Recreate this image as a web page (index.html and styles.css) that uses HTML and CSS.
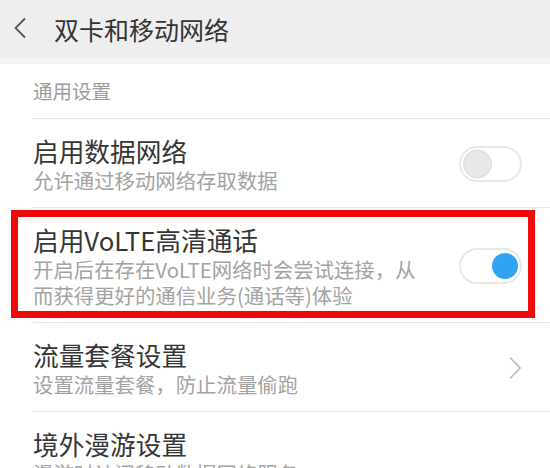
FILE: index.html
```html
<!DOCTYPE html>
<html lang="zh-CN">
<head>
<meta charset="utf-8">
<title>双卡和移动网络</title>
<link rel="stylesheet" href="styles.css">
</head>
<body>
<div class="page">
  <header class="topbar">
    <svg class="back" width="14" height="22" viewBox="0 0 14 22"><path d="M12 1.5 L2.5 11 L12 20.5" fill="none" stroke="#555" stroke-width="1.8"/></svg>
    <span class="title">双卡和移动网络</span>
  </header>
  <div class="strip"></div>
  <div class="section">通用设置</div>
  <div class="list">
    <div class="item">
      <div class="text">
        <div class="name">启用数据网络</div>
        <div class="desc">允许通过移动网络存取数据</div>
      </div>
      <div class="toggle"><span class="knob off"></span></div>
    </div>
    <div class="item">
      <div class="text">
        <div class="name">启用VoLTE高清通话</div>
        <div class="desc">开启后在存在VoLTE网络时会尝试连接，从<br>而获得更好的通信业务(通话等)体验</div>
      </div>
      <div class="toggle"><span class="knob blue"></span></div>
      <div class="redbox"></div>
    </div>
    <div class="item">
      <div class="text">
        <div class="name">流量套餐设置</div>
        <div class="desc">设置流量套餐，防止流量偷跑</div>
      </div>
      <svg class="chev" width="14" height="24" viewBox="0 0 14 24"><path d="M2 1.5 L12 12 L2 22.5" fill="none" stroke="#bdbdbd" stroke-width="1.8"/></svg>
    </div>
    <div class="item">
      <div class="text">
        <div class="name">境外漫游设置</div>
        <div class="desc">漫游时访问移动数据网络服务</div>
      </div>
    </div>
  </div>
</div>
</body>
</html>
```
FILE: styles.css
```css
* { box-sizing: border-box; }
html, body { margin: 0; padding: 0; }
body {
  width: 550px;
  height: 468px;
  overflow: hidden;
  background: #fff;
  font-family: "Noto Sans CJK SC", "Noto Sans", sans-serif;
}
.page { width: 550px; }
.topbar {
  height: 57px;
  background: #eeeeee;
  display: flex;
  align-items: center;
}
.back { margin-left: 13px; margin-top: -1px; }
.title {
  margin-left: 27px;
  font-size: 25px;
  color: #343434;
  line-height: 30px;
}
.strip {
  height: 7px;
  background: #f4f4f4;
  box-shadow: inset 0 1px 1px rgba(0,0,0,0.04);
}
.section {
  height: 54px;
  padding-left: 33px;
  display: flex;
  align-items: center;
  font-size: 19.5px;
  color: #9c9c9c;
  padding-bottom: 2px;
}
.list { border-top: 1px solid #e6e6e6; margin-left: 33px; }
.item {
  position: relative;
  display: flex;
  align-items: center;
  padding: 15px 28px 14px 0;
  border-bottom: 1px solid #e9e6e6;
}
.text { flex: 1; }
.name {
  font-size: 25.7px;
  line-height: 33px;
  color: #363636;
}
.desc {
  font-size: 20.4px;
  line-height: 26px;
  color: #a3a3a3;
}
.toggle {
  position: relative;
  width: 63px;
  height: 36px;
  border: 2px solid #e8e8e8;
  border-radius: 18px;
  background: #fff;
}
.knob {
  position: absolute;
  top: 50%;
  border-radius: 50%;
  transform: translateY(-50%);
}
.knob.off {
  left: 2px;
  width: 29px;
  height: 29px;
  background: #e8e8e8;
  border: 1px solid #dadada;
}
.knob.blue {
  right: 2px;
  width: 26px;
  height: 26px;
  background: #2ea4f2;
}
.redbox {
  position: absolute;
  left: -22px;
  right: 15px;
  top: 2px;
  bottom: 4px;
  border: 7px solid #ee0a0a;
}
```
